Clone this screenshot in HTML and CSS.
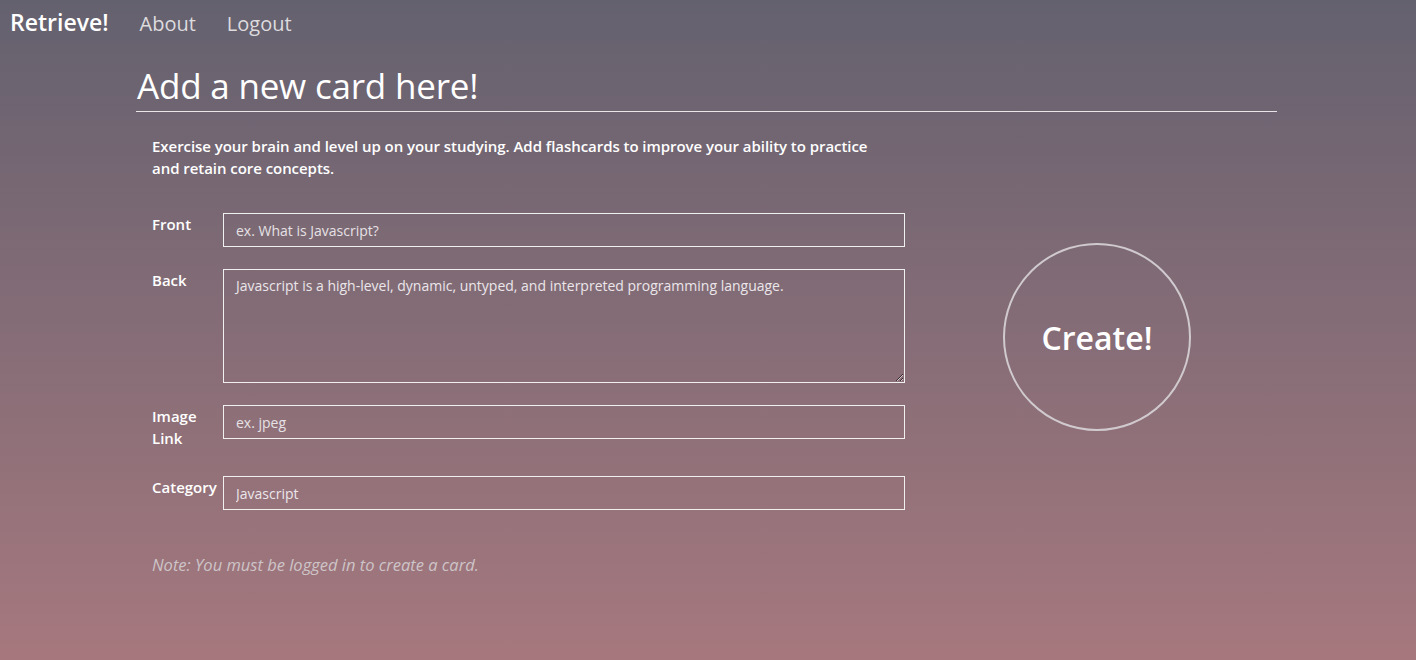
FILE: index.html
```html
<!DOCTYPE html>
<html>
<head>
<meta charset="utf-8">
<link rel="stylesheet" href="styles.css">
</head>
<body>
<nav class="nav">
  <a class="brand" href="#">Retrieve!</a>
  <a class="nav-link" href="#">About</a>
  <a class="nav-link" href="#">Logout</a>
</nav>
<main class="page">
  <h1 class="title">Add a new card here!</h1>
  <div class="content">
    <div class="form-col">
      <p class="intro">Exercise your brain and level up on your studying. Add flashcards to improve your ability to practice and retain core concepts.</p>
      <form class="form">
        <div class="row">
          <label class="label">Front</label>
          <input class="field" type="text" placeholder="ex. What is Javascript?">
        </div>
        <div class="row">
          <label class="label">Back</label>
          <textarea class="field area">Javascript is a high-level, dynamic, untyped, and interpreted programming language.</textarea>
        </div>
        <div class="row">
          <label class="label">Image Link</label>
          <input class="field" type="text" placeholder="ex. jpeg">
        </div>
        <div class="row">
          <label class="label">Category</label>
          <input class="field" type="text" value="Javascript">
        </div>
      </form>
      <p class="note">Note: You must be logged in to create a card.</p>
    </div>
    <div class="action-col">
      <button class="create" type="button">Create!</button>
    </div>
  </div>
</main>
</body>
</html>
```

FILE: styles.css
```css
html, body {
  margin: 0;
  padding: 0;
  height: 100%;
}
body {
  font-family: "Open Sans", "Noto Sans", sans-serif;
  background: linear-gradient(to bottom, #64616f 0%, #a6787e 100%);
  color: #fff;
  min-height: 660px;
}
.nav {
  display: flex;
  align-items: baseline;
  height: 48px;
  padding-left: 10px;
  box-sizing: border-box;
  padding-top: 6px;
}
.brand {
  color: #fff;
  text-decoration: none;
  font-size: 23px;
  font-weight: 600;
  margin-right: 31px;
}
.nav-link {
  color: #dddbde;
  text-decoration: none;
  font-size: 20px;
  font-weight: 400;
  margin-right: 31px;
}
.page {
  margin-left: 136px;
  width: 1141px;
}
.title {
  margin: 16px 0 0 0;
  font-size: 35px;
  font-weight: 400;
  line-height: 44px;
  padding-left: 1px;
  padding-bottom: 3px;
  border-bottom: 1px solid #e8e4e8;
  letter-spacing: -0.2px;
}
.content {
  display: flex;
}
.form-col {
  width: 770px;
  padding-left: 16px;
  box-sizing: border-box;
}
.intro {
  margin: 23px 0 0 0;
  width: 735px;
  font-size: 15px;
  line-height: 22px;
  font-weight: 600;
  letter-spacing: -0.05px;
}
.form {
  margin-top: 34px;
  display: flex;
  flex-direction: column;
  gap: 22px;
}
.row {
  display: flex;
  align-items: flex-start;
}
.label {
  width: 71px;
  font-size: 15px;
  font-weight: 600;
  line-height: 22px;
  padding-bottom: 5px;
}
.field {
  width: 682px;
  height: 34px;
  box-sizing: border-box;
  border: 1px solid #f0f0f0;
  background: transparent;
  color: #ebe6ea;
  font-family: inherit;
  font-size: 14px;
  padding: 0 12px;
  margin: 0;
  outline: none;
}
.field::placeholder {
  color: #e6e1e4;
  opacity: 1;
}
.area {
  height: 114px;
  padding: 7px 12px;
  resize: vertical;
  line-height: 18px;
}
.note {
  margin: 43px 0 0 0;
  font-size: 16.5px;
  font-style: italic;
  color: #cdc4c8;
}
.action-col {
  flex: 1;
  display: flex;
  justify-content: flex-start;
  padding-left: 97px;
  padding-top: 131px;
}
.create {
  width: 188px;
  height: 188px;
  border-radius: 50%;
  border: 2px solid #d0cace;
  background: transparent;
  color: #fff;
  font-family: inherit;
  font-size: 32px;
  font-weight: 600;
  cursor: pointer;
  padding: 0;
}
```
